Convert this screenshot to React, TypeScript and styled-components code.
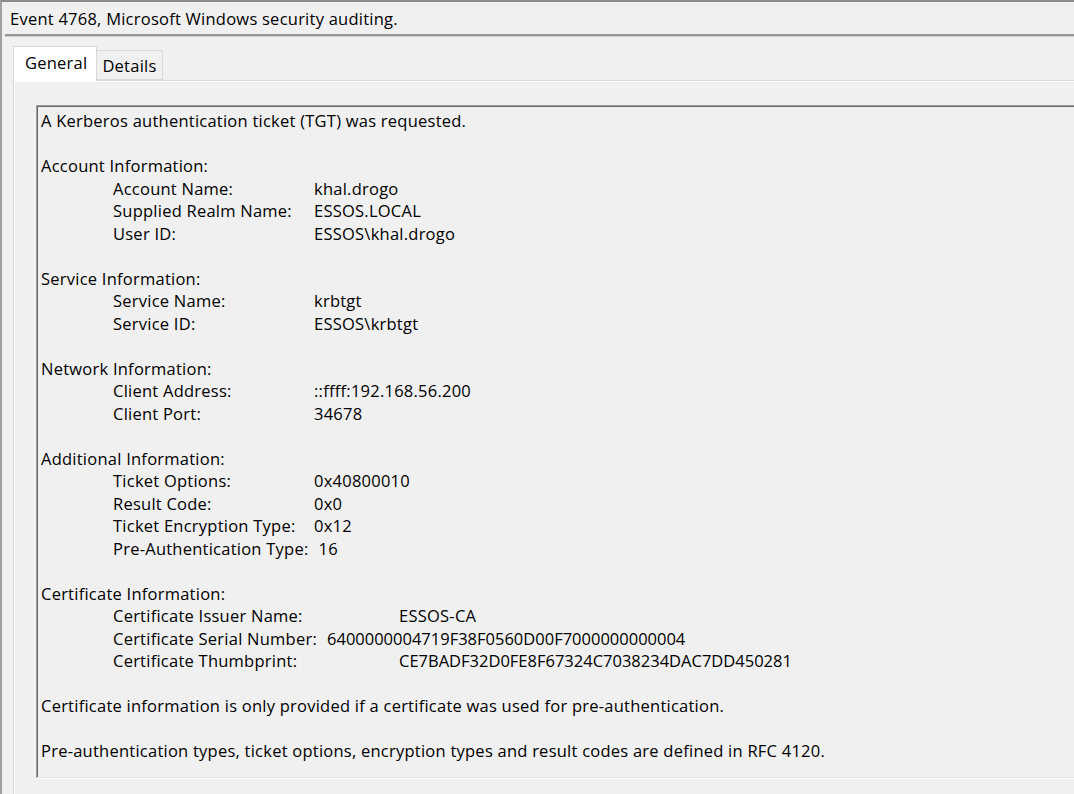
import React from "react";
import styled, { createGlobalStyle } from "styled-components";

const Global = createGlobalStyle`
  html, body { margin: 0; padding: 0; background: #f0f0f0; overflow: hidden; }
  body { font-family: "Open Sans", "Noto Sans", sans-serif; }
`;

const Window = styled.div`
  width: 1074px;
  height: 794px;
  box-sizing: border-box;
  background: #f0f0f0;
  border-top: 2px solid #8c8c8c;
  border-left: 2px solid #a0a0a0;
  overflow: hidden;
  display: flex;
  flex-direction: column;
  color: #000;
  font-size: 16.5px;
  letter-spacing: 0.24px;
`;

const Header = styled.div`
  height: 32px;
  padding-left: 8px;
  display: flex;
  align-items: center;
  white-space: nowrap;
`;

const Separator = styled.div`
  margin-left: 3px;
  height: 3px;
  border-top: 2px solid #959595;
  border-bottom: 1px solid #cfcfcf;
  box-sizing: border-box;
`;

const TabArea = styled.div`
  flex: 1;
  padding: 9px 0 0 11px;
  display: flex;
  flex-direction: column;
`;

const TabStrip = styled.div`
  display: flex;
  align-items: flex-end;
  height: 34px;
`;

const Tab = styled.div<{ $active?: boolean }>`
  box-sizing: border-box;
  height: ${(p) => (p.$active ? 35 : 30)}px;
  margin-bottom: ${(p) => (p.$active ? -1 : 0)}px;
  padding: ${(p) => (p.$active ? "0 9px 4px 11px" : "0 5px 0 5px")};
  display: flex;
  align-items: center;
  background: ${(p) => (p.$active ? "#ffffff" : "#f0f0f0")};
  border: 1px solid #d9d9d9;
  border-bottom: ${(p) => (p.$active ? "none" : "1px solid #d9d9d9")};
  ${(p) => (p.$active ? "" : "border-left: none;")}
  position: relative;
  z-index: ${(p) => (p.$active ? 1 : 0)};
  white-space: nowrap;
`;

const Panel = styled.div`
  flex: 1;
  border-top: 1px solid #d9d9d9;
  border-left: 1px solid #d9d9d9;
  box-shadow: inset 1px 1px 0 #ffffff;
  padding: 24px 0 0 22px;
  background: #f0f0f0;
  overflow: hidden;
`;

const TextBox = styled.div`
  box-sizing: border-box;
  height: 673px;
  margin-right: -40px;
  border-top: 1px solid #a0a0a0;
  border-left: 1px solid #a0a0a0;
  border-bottom: 1px solid #e3e3e3;
  box-shadow: inset 1px 1px 0 #696969, 0 1px 0 #ffffff;
  padding: 4px 0 0 4px;
  background: #f0f0f0;
  line-height: 22.5px;
  white-space: nowrap;
  display: flex;
  flex-direction: column;
  gap: 22.5px;
`;

const Block = styled.div`
  display: flex;
  flex-direction: column;
`;

const Line = styled.div``;

const Row = styled.div`
  display: flex;
  padding-left: 72px;
`;

const Label = styled.span<{ $w: number }>`
  flex: none;
  box-sizing: border-box;
  min-width: ${(p) => p.$w}px;
  padding-right: 10px;
`;

const Value = styled.span<{ $narrow?: boolean }>`
  letter-spacing: ${(p) => (p.$narrow ? "0px" : "inherit")};
`;

type Field = [string, string, number?, boolean?];

const sections: { title: string; rows: Field[] }[] = [
  {
    title: "Account Information:",
    rows: [
      ["Account Name:", "khal.drogo"],
      ["Supplied Realm Name:", "ESSOS.LOCAL"],
      ["User ID:", "ESSOS\\khal.drogo"],
    ],
  },
  {
    title: "Service Information:",
    rows: [
      ["Service Name:", "krbtgt"],
      ["Service ID:", "ESSOS\\krbtgt"],
    ],
  },
  {
    title: "Network Information:",
    rows: [
      ["Client Address:", "::ffff:192.168.56.200"],
      ["Client Port:", "34678"],
    ],
  },
  {
    title: "Additional Information:",
    rows: [
      ["Ticket Options:", "0x40800010"],
      ["Result Code:", "0x0"],
      ["Ticket Encryption Type:", "0x12"],
      ["Pre-Authentication Type:", "16"],
    ],
  },
  {
    title: "Certificate Information:",
    rows: [
      ["Certificate Issuer Name:", "ESSOS-CA", 286],
      ["Certificate Serial Number:", "6400000004719F38F0560D00F7000000000004", 201, true],
      ["Certificate Thumbprint:", "CE7BADF32D0FE8F67324C7038234DAC7DD450281", 286, true],
    ],
  },
];

export default function App() {
  return (
    <>
      <Global />
      <Window>
        <Header>Event 4768, Microsoft Windows security auditing.</Header>
        <Separator />
        <TabArea>
          <TabStrip>
            <Tab $active>General</Tab>
            <Tab>Details</Tab>
          </TabStrip>
          <Panel>
            <TextBox>
              <Line>A Kerberos authentication ticket (TGT) was requested.</Line>
              {sections.map((s) => (
                <Block key={s.title}>
                  <Line>{s.title}</Line>
                  {s.rows.map(([label, value, w, narrow]) => (
                    <Row key={label}>
                      <Label $w={w ?? 201}>{label}</Label>
                      <Value $narrow={narrow}>{value}</Value>
                    </Row>
                  ))}
                </Block>
              ))}
              <Line>
                Certificate information is only provided if a certificate was used for
                pre-authentication.
              </Line>
              <Line>
                Pre-authentication types, ticket options, encryption types and result codes
                are defined in RFC 4120.
              </Line>
            </TextBox>
          </Panel>
        </TabArea>
      </Window>
    </>
  );
}
